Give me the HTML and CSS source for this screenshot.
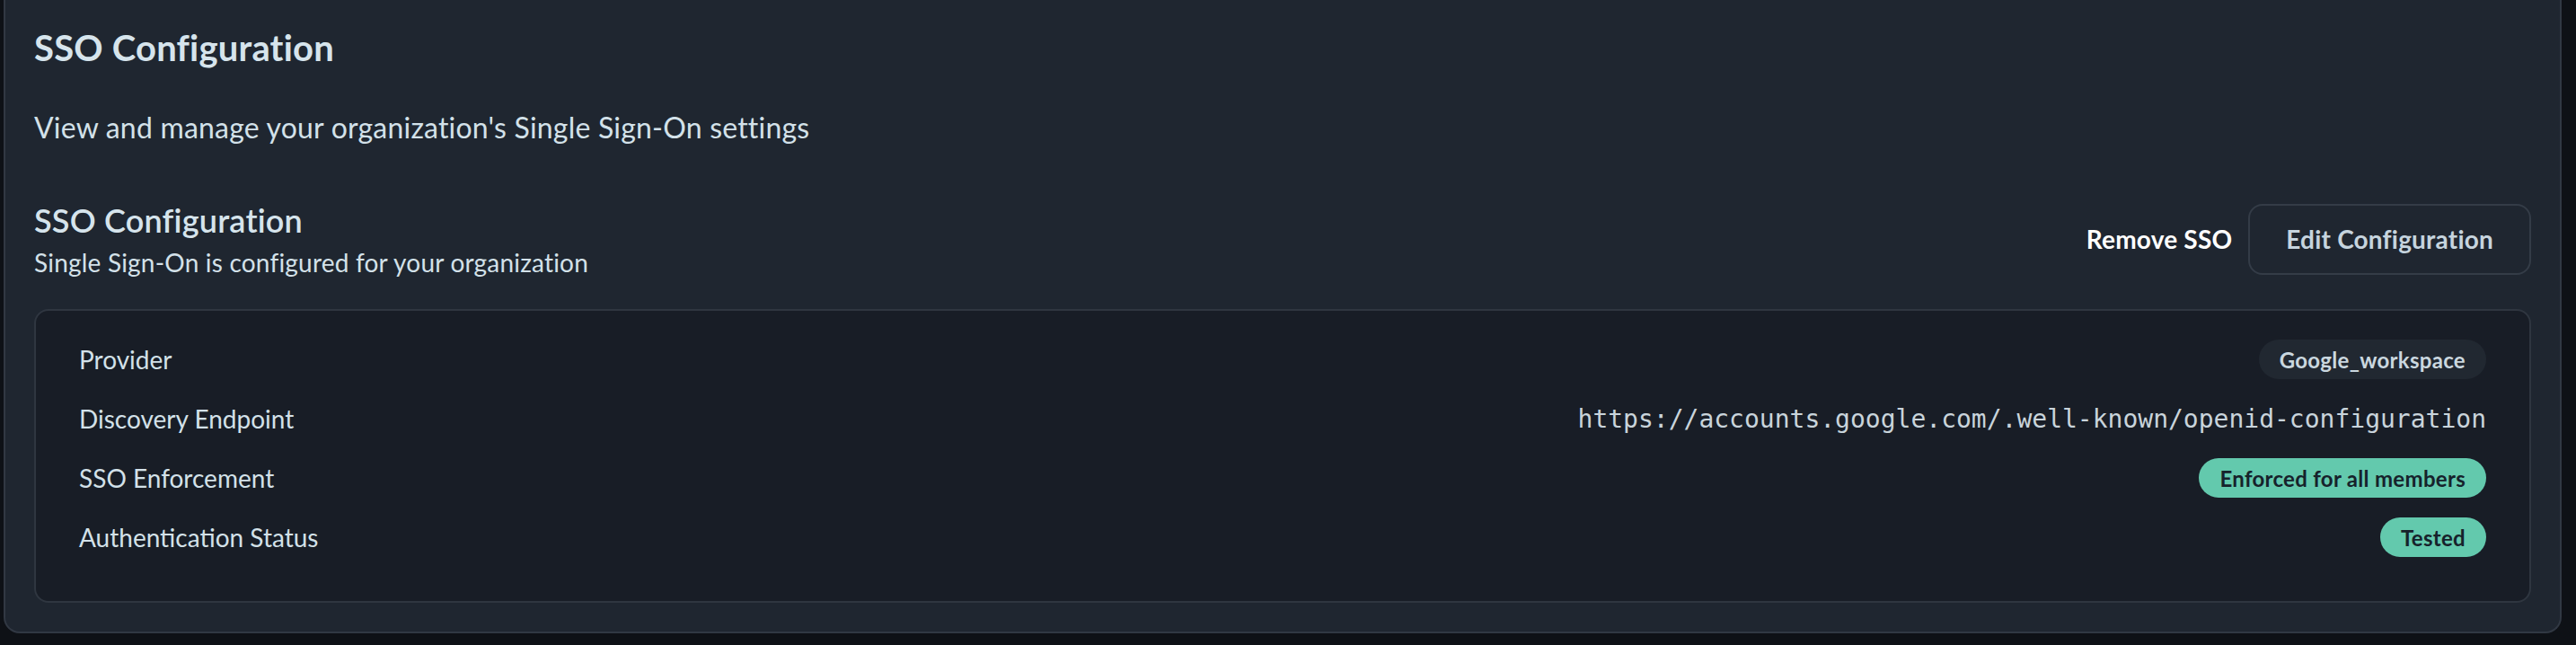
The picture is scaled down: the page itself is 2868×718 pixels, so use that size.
FILE: index.html
```html
<!DOCTYPE html>
<html lang="en">
<head>
<meta charset="utf-8">
<title>SSO Configuration</title>
<link rel="stylesheet" href="styles.css">
</head>
<body>
<div class="page">
  <section class="card">
    <h1 class="card-title">SSO Configuration</h1>
    <p class="card-desc">View and manage your organization's Single Sign-On settings</p>
    <div class="section-head">
      <div class="section-text">
        <h2 class="section-title">SSO Configuration</h2>
        <p class="section-desc">Single Sign-On is configured for your organization</p>
      </div>
      <div class="actions">
        <button class="btn btn-ghost" type="button">Remove SSO</button>
        <button class="btn btn-outline" type="button">Edit Configuration</button>
      </div>
    </div>
    <div class="details">
      <div class="row">
        <span class="label">Provider</span>
        <span class="badge badge-muted">Google_workspace</span>
      </div>
      <div class="row">
        <span class="label">Discovery Endpoint</span>
        <span class="mono">https://accounts.google.com/.well-known/openid-configuration</span>
      </div>
      <div class="row">
        <span class="label">SSO Enforcement</span>
        <span class="badge badge-teal">Enforced for all members</span>
      </div>
      <div class="row">
        <span class="label">Authentication Status</span>
        <span class="badge badge-teal">Tested</span>
      </div>
    </div>
  </section>
</div>
</body>
</html>
```

FILE: styles.css
```css
* { box-sizing: border-box; }

html, body {
  margin: 0;
  padding: 0;
  background: #0e1116;
}

body {
  font-family: Lato, "Noto Sans", sans-serif;
  color: #d3e1e9;
}

.page {
  padding: 0 16px 13px 4px;
}

.card {
  background: #1f2630;
  border: 2px solid #313843;
  border-top-width: 0;
  border-radius: 0 0 18px 18px;
  padding: 25px 32px 32px 32px;
}

.card-title {
  margin: 0;
  font-size: 40px;
  line-height: 56px;
  font-weight: 700;
  letter-spacing: 0.2px;
  color: #d6e4ec;
}

.card-desc {
  margin: 37px 0 0 0;
  font-size: 32px;
  line-height: 48px;
  font-weight: 400;
  letter-spacing: 0.2px;
  color: #d3e1e9;
}

.section-head {
  margin-top: 54px;
  display: flex;
  align-items: center;
  justify-content: space-between;
}

.section-title {
  margin: 0;
  font-size: 36px;
  line-height: 50px;
  font-weight: 600;
  letter-spacing: 0.2px;
  color: #d6e4ec;
}

.section-desc {
  margin: 2px 0 0 0;
  font-size: 28px;
  line-height: 40px;
  letter-spacing: 0.2px;
  color: #d3e1e9;
}

.actions {
  display: flex;
  align-items: center;
  gap: 18px;
}

.btn {
  font-family: inherit;
  font-size: 28px;
  font-weight: 700;
  letter-spacing: 0.2px;
  background: transparent;
  cursor: pointer;
}

.btn-ghost {
  border: 0;
  padding: 0;
  color: #ffffff;
}

.btn-outline {
  height: 79px;
  padding: 0 40px;
  border: 2px solid #343c47;
  border-radius: 16px;
  color: #c6d4de;
}

.details {
  margin-top: 32px;
  background: #181d26;
  border: 2px solid #2f3640;
  border-radius: 16px;
  padding: 32px 48px 49px 48px;
  display: flex;
  flex-direction: column;
  gap: 22px;
}

.row {
  height: 44px;
  display: flex;
  align-items: center;
  justify-content: space-between;
}

.label {
  font-size: 28px;
  color: #d3e1e9;
}

.badge {
  height: 44px;
  display: inline-flex;
  align-items: center;
  padding: 0 23px;
  border-radius: 22px;
  font-size: 24px;
  font-weight: 700;
  letter-spacing: 0.3px;
}

.badge-muted {
  background: #212831;
  color: #cad7df;
}

.badge-teal {
  background: #63c9ad;
  color: #16222b;
}

.mono {
  font-family: "DejaVu Sans Mono", "Liberation Mono", monospace;
  font-size: 28px;
  color: #c9d4db;
}
```
